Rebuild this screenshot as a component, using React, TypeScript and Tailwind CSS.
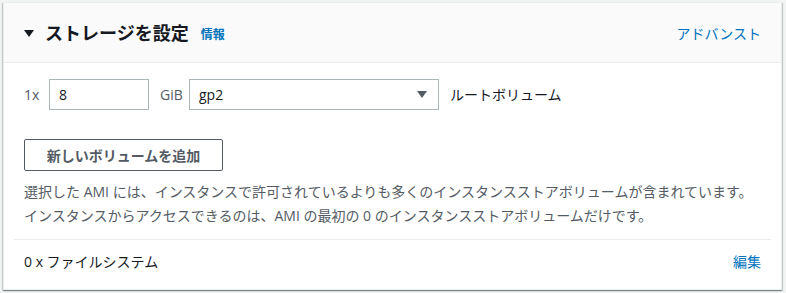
import { useState } from "react";

const font = {
  fontFamily: '"Open Sans", "Noto Sans CJK JP", sans-serif',
};

export default function App() {
  const [size, setSize] = useState("8");
  return (
    <div className="w-[786px] h-[293px] bg-[#f2f3f3] pt-[2px] pl-[3px]" style={font}>
      <div className="w-[779px] h-[288px] bg-white border border-[#eaeded] shadow-[0_1px_1px_0_rgba(0,28,36,0.3),1px_1px_1px_0_rgba(0,28,36,0.15),-1px_1px_1px_0_rgba(0,28,36,0.15)] flex flex-col">
        {/* header */}
        <div className="h-[60px] bg-[#fafafa] border-b border-[#eaeded] flex items-center justify-between pl-[20px] pr-[20px] pt-[1px]">
          <div className="flex items-center">
            <span className="w-0 h-0 border-l-[5px] border-r-[5px] border-t-[7px] border-l-transparent border-r-transparent border-t-[#16191f] mt-[1px]" />
            <h2 className="ml-[11px] text-[18px] font-bold text-[#16191f] leading-none">ストレージを設定</h2>
            <a className="ml-[12px] text-[12px] font-bold text-[#0073bb] mt-[3px]">情報</a>
          </div>
          <a className="text-[14px] text-[#0073bb]">アドバンスト</a>
        </div>

        {/* body */}
        <div className="px-[20px] pt-[16px] flex flex-col">
          <div className="flex items-center h-[31px]">
            <span className="text-[14px] text-[#545b64] w-[25px]">1x</span>
            <input
              value={size}
              onChange={(e) => setSize(e.target.value)}
              className="w-[100px] h-[31px] border border-[#aab7b8] px-[9px] text-[14px] text-[#16191f] outline-none"
            />
            <span className="text-[14px] text-[#545b64] ml-[11px] w-[29px]">GiB</span>
            <div className="w-[250px] h-[31px] border border-[#aab7b8] flex items-center justify-between pl-[9px] pr-[11px]">
              <span className="text-[14px] text-[#16191f]">gp2</span>
              <span className="w-0 h-0 border-l-[5px] border-r-[5px] border-t-[7px] border-l-transparent border-r-transparent border-t-[#545b64]" />
            </div>
            <span className="ml-[11px] text-[14px] text-[#16191f]">ルートボリューム</span>
          </div>

          <button className="mt-[29px] w-[199px] h-[32px] border border-[#545b64] rounded-[2px] text-[14px] font-bold text-[#545b64]">
            新しいボリュームを追加
          </button>

          <p className="mt-[9px] text-[14px] leading-[24px] text-[#545b64]">
            選択した AMI には、インスタンスで許可されているよりも多くのインスタンスストアボリュームが含まれています。
            <br />
            インスタンスからアクセスできるのは、AMI の最初の 0 のインスタンスストアボリュームだけです。
          </p>
        </div>

        <div className="mx-[10px] mt-[11px] border-t border-[#eaeded]" />
        <div className="flex items-center justify-between px-[20px] h-[44px] pb-[1px]">
          <span className="text-[14px] text-[#16191f]">0 x ファイルシステム</span>
          <a className="text-[14px] text-[#0073bb]">編集</a>
        </div>
      </div>
    </div>
  );
}
